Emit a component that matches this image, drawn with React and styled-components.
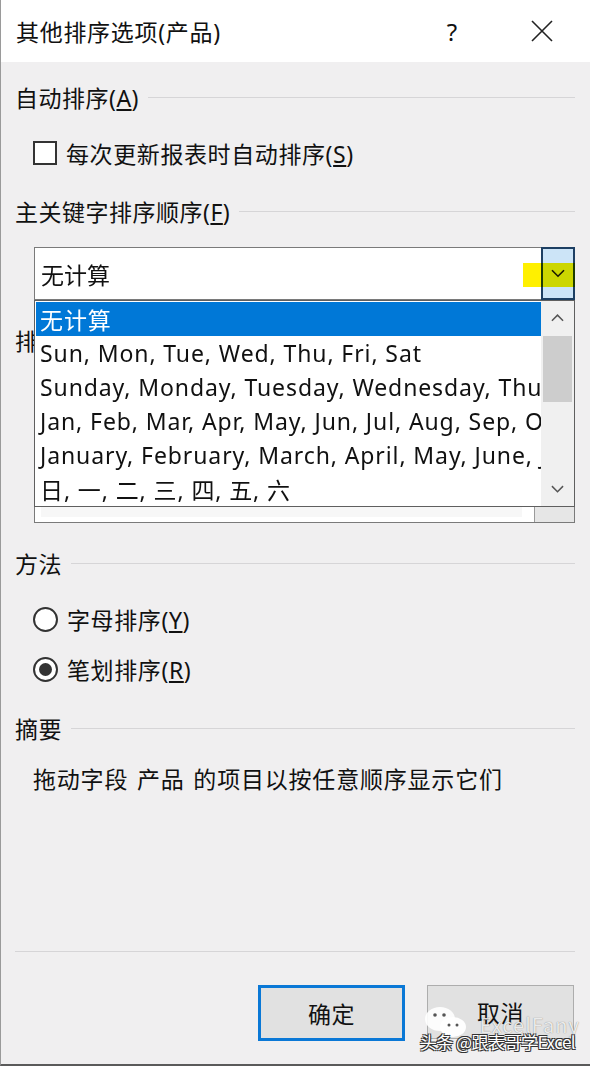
import React from "react"
import styled, { createGlobalStyle } from "styled-components"

const GlobalStyle = createGlobalStyle`
  html, body {
    margin: 0;
    padding: 0;
    background: #f0eff0;
  }
  * {
    box-sizing: border-box;
  }
`

const FONT = `"Noto Sans", "Noto Sans CJK SC", sans-serif`

const Window = styled.div`
  position: relative;
  width: 590px;
  height: 1066px;
  display: flex;
  flex-direction: column;
  background: #f0eff0;
  font-family: ${FONT};
  color: #111;
  border-left: 1px solid #9a9a9a;
  border-bottom: 2px solid #5a5a5a;
  overflow: hidden;
`

const TitleBar = styled.div`
  height: 62px;
  flex-shrink: 0;
  display: flex;
  align-items: center;
  padding: 0 0 0 15px;
  background: #ffffff;
`

const Title = styled.div`
  flex: 1;
  font-size: 23px;
  letter-spacing: 0.7px;
`

const TitleButton = styled.div`
  width: 60px;
  display: flex;
  justify-content: center;
  align-items: center;
  font-size: 24px;
  margin-right: ${props => props.mr || 0}px;
`

const Body = styled.div`
  flex: 1;
  display: flex;
  flex-direction: column;
  padding: 0 15px 0 14px;
`

const GroupHeader = styled.div`
  height: 34px;
  margin-top: ${props => props.mt}px;
  display: flex;
  align-items: center;
  gap: 9px;
  font-size: 23px;
  letter-spacing: 0.5px;

  &::after {
    content: "";
    flex: 1;
    height: 1px;
    background: #d6d5d7;
  }
`

const OptionRow = styled.div`
  height: 34px;
  margin-top: ${props => props.mt}px;
  padding-left: 18px;
  display: flex;
  align-items: center;
  gap: 9px;
  font-size: 23px;
  letter-spacing: 0.6px;
`

const Checkbox = styled.span`
  width: 24px;
  height: 24px;
  border: 2px solid #333;
  background: #fff;
`

const Radio = styled.span`
  width: 25px;
  height: 25px;
  border-radius: 50%;
  border: 2px solid #333;
  background: #fff;
  display: flex;
  align-items: center;
  justify-content: center;

  &::after {
    content: "";
    width: 13px;
    height: 13px;
    border-radius: 50%;
    background: ${props => (props.checked ? "#333" : "transparent")};
  }
`

const ComboWrap = styled.div`
  position: relative;
  margin: 19px 0 0 19px;
  z-index: 2;
`

const Combo = styled.div`
  height: 53px;
  display: flex;
  align-items: center;
  background: #fff;
  border: 1px solid #7a7a7a;
  border-right: none;
  font-size: 23px;
`

const ComboValue = styled.div`
  flex: 1;
  padding-left: 6px;
`

const DropButton = styled.div`
  width: 34px;
  height: 53px;
  display: flex;
  align-items: center;
  justify-content: center;
  background: #cce4f7;
  border: 2px solid #1d3f63;
`

const Highlight = styled.div`
  position: absolute;
  right: 0;
  top: 16px;
  width: 52px;
  height: 24px;
  background: #fff000;
  mix-blend-mode: multiply;
  pointer-events: none;
`

const Popup = styled.div`
  position: absolute;
  left: 0;
  right: 0;
  top: 53px;
  height: 207px;
  display: flex;
  background: #fff;
  border: 1px solid #5f5f5f;
`

const List = styled.div`
  flex: 1;
  padding: 1px 0 0 1px;
  overflow: hidden;
`

const Item = styled.div`
  height: 34px;
  display: flex;
  align-items: center;
  padding-left: 4px;
  font-size: 23px;
  letter-spacing: 0.9px;
  white-space: nowrap;
  background: ${props => (props.selected ? "#0078d7" : "transparent")};
  color: ${props => (props.selected ? "#fff" : "#111")};
`

const ScrollBar = styled.div`
  width: 33px;
  display: flex;
  flex-direction: column;
  align-items: center;
  background: #f0f0f0;
`

const ScrollArrow = styled.div`
  height: 34px;
  width: 100%;
  display: flex;
  align-items: center;
  justify-content: center;
`

const ScrollTrack = styled.div`
  flex: 1;
  width: 100%;
  padding: 1px 2px;
`

const Thumb = styled.div`
  height: 66px;
  background: #cdcdcd;
`

const HiddenBox = styled.div`
  height: 151px;
  margin: 15px 0 0 19px;
  display: flex;
  background: #fff;
  border: 1px solid #7a7a7a;
`

const HiddenField = styled.div`
  flex: 1;
  margin: 0 12px 5px 6px;
  align-self: flex-end;
  height: 12px;
  background: #f7f7f7;
`

const HiddenButton = styled.div`
  width: 40px;
  border-left: 1px solid #9a9a9a;
  background: #e6e6e6;
`

const Summary = styled.div`
  height: 34px;
  margin-top: 16px;
  padding-left: 18px;
  display: flex;
  align-items: center;
  font-size: 23px;
  letter-spacing: 0.8px;
  word-spacing: 2px;
`

const Footer = styled.div`
  height: 113px;
  flex-shrink: 0;
  display: flex;
  flex-direction: column;
  padding: 0 15px 0 14px;
`

const Separator = styled.div`
  height: 1px;
  background: #d6d5d7;
`

const ButtonRow = styled.div`
  margin-top: 33px;
  display: flex;
  justify-content: flex-end;
  gap: 22px;
  padding-right: 1px;
`

const Button = styled.div`
  width: 147px;
  height: ${props => (props.primary ? 56 : 54)}px;
  display: flex;
  align-items: center;
  justify-content: center;
  font-size: 23px;
  letter-spacing: 0.5px;
  background: #e1e1e1;
  border: ${props => (props.primary ? "3px solid #0a78d6" : "1px solid #adadad")};
`

const Watermark = styled.div`
  position: absolute;
  right: 10px;
  bottom: 10px;
  display: flex;
  flex-direction: column;
  align-items: flex-start;
  font-family: "Noto Sans CJK SC", sans-serif;
  pointer-events: none;
`

const WatermarkLogo = styled.div`
  display: flex;
  align-items: flex-end;
  gap: 12px;
  margin: 0 0 -10px 4px;
`

const WatermarkGhost = styled.span`
  font-size: 20px;
  color: rgba(255, 255, 255, 0.85);
  text-shadow: 0 0 1px rgba(0, 0, 0, 0.5);
  letter-spacing: 1px;
`

const WatermarkText = styled.div`
  font-size: 17px;
  color: #fff;
  letter-spacing: -0.5px;
  text-shadow: -1px -1px 0 #333, 1px -1px 0 #333, -1px 1px 0 #333,
    1px 1px 0 #333;
`

const Chevron = ({ up, color = "#333", size = 14 }) => (
  <svg width={size} height={size * 0.6} viewBox="0 0 14 8">
    <path
      d={up ? "M1 7 L7 1 L13 7" : "M1 1 L7 7 L13 1"}
      fill="none"
      stroke={color}
      strokeWidth="1.6"
    />
  </svg>
)

const WeChatMark = () => (
  <svg width="44" height="34" viewBox="0 0 44 34">
    <ellipse cx="16" cy="14" rx="15" ry="12" fill="rgba(255,255,255,0.9)" />
    <ellipse cx="29" cy="22" rx="13" ry="10" fill="rgba(255,255,255,0.95)" />
    <circle cx="11" cy="10" r="1.8" fill="#555" />
    <circle cx="20" cy="10" r="1.8" fill="#555" />
    <circle cx="25" cy="20" r="1.5" fill="#555" />
    <circle cx="33" cy="20" r="1.5" fill="#555" />
  </svg>
)

const listItems = [
  "无计算",
  "Sun, Mon, Tue, Wed, Thu, Fri, Sat",
  "Sunday, Monday, Tuesday, Wednesday, Thursday, Friday, Saturday",
  "Jan, Feb, Mar, Apr, May, Jun, Jul, Aug, Sep, Oct, Nov, Dec",
  "January, February, March, April, May, June, July, August",
  "日, 一, 二, 三, 四, 五, 六",
]

const App = () => {
  return (
    <>
      <GlobalStyle />
      <Window>
        <TitleBar>
          <Title>其他排序选项(产品)</Title>
          <TitleButton mr={30}>?</TitleButton>
          <TitleButton mr={18}>
            <svg width="22" height="22" viewBox="0 0 22 22">
              <path d="M1 1 L21 21 M21 1 L1 21" stroke="#222" strokeWidth="1.6" />
            </svg>
          </TitleButton>
        </TitleBar>

        <Body>
          <GroupHeader mt={18}>
            <span>
              自动排序(<u>A</u>)
            </span>
          </GroupHeader>
          <OptionRow mt={22}>
            <Checkbox />
            <span>
              每次更新报表时自动排序(<u>S</u>)
            </span>
          </OptionRow>

          <GroupHeader mt={24}>
            <span>
              主关键字排序顺序(<u>F</u>)
            </span>
          </GroupHeader>
          <ComboWrap>
            <Combo>
              <ComboValue>无计算</ComboValue>
              <DropButton>
                <Chevron color="#1a1a1a" size={14} />
              </DropButton>
            </Combo>
            <Highlight />
            <Popup>
              <List>
                {listItems.map((text, i) => (
                  <Item key={text} selected={i === 0}>
                    {text}
                  </Item>
                ))}
              </List>
              <ScrollBar>
                <ScrollArrow>
                  <Chevron up color="#555" size={13} />
                </ScrollArrow>
                <ScrollTrack>
                  <Thumb />
                </ScrollTrack>
                <ScrollArrow>
                  <Chevron color="#555" size={13} />
                </ScrollArrow>
              </ScrollBar>
            </Popup>
          </ComboWrap>

          <GroupHeader mt={23}>
            <span>
              排序依据(<u>O</u>)
            </span>
          </GroupHeader>
          <HiddenBox>
            <HiddenField />
            <HiddenButton />
          </HiddenBox>

          <GroupHeader mt={23}>
            <span>方法</span>
          </GroupHeader>
          <OptionRow mt={22}>
            <Radio />
            <span>
              字母排序(<u>Y</u>)
            </span>
          </OptionRow>
          <OptionRow mt={16}>
            <Radio checked />
            <span>
              笔划排序(<u>R</u>)
            </span>
          </OptionRow>

          <GroupHeader mt={25}>
            <span>摘要</span>
          </GroupHeader>
          <Summary>拖动字段 产品 的项目以按任意顺序显示它们</Summary>
        </Body>

        <Footer>
          <Separator />
          <ButtonRow>
            <Button primary>确定</Button>
            <Button>取消</Button>
          </ButtonRow>
        </Footer>

        <Watermark>
          <WatermarkLogo>
            <WeChatMark />
            <WatermarkGhost>ExcelFany</WatermarkGhost>
          </WatermarkLogo>
          <WatermarkText>头条 @跟表哥学Excel</WatermarkText>
        </Watermark>
      </Window>
    </>
  )
}

export default App
